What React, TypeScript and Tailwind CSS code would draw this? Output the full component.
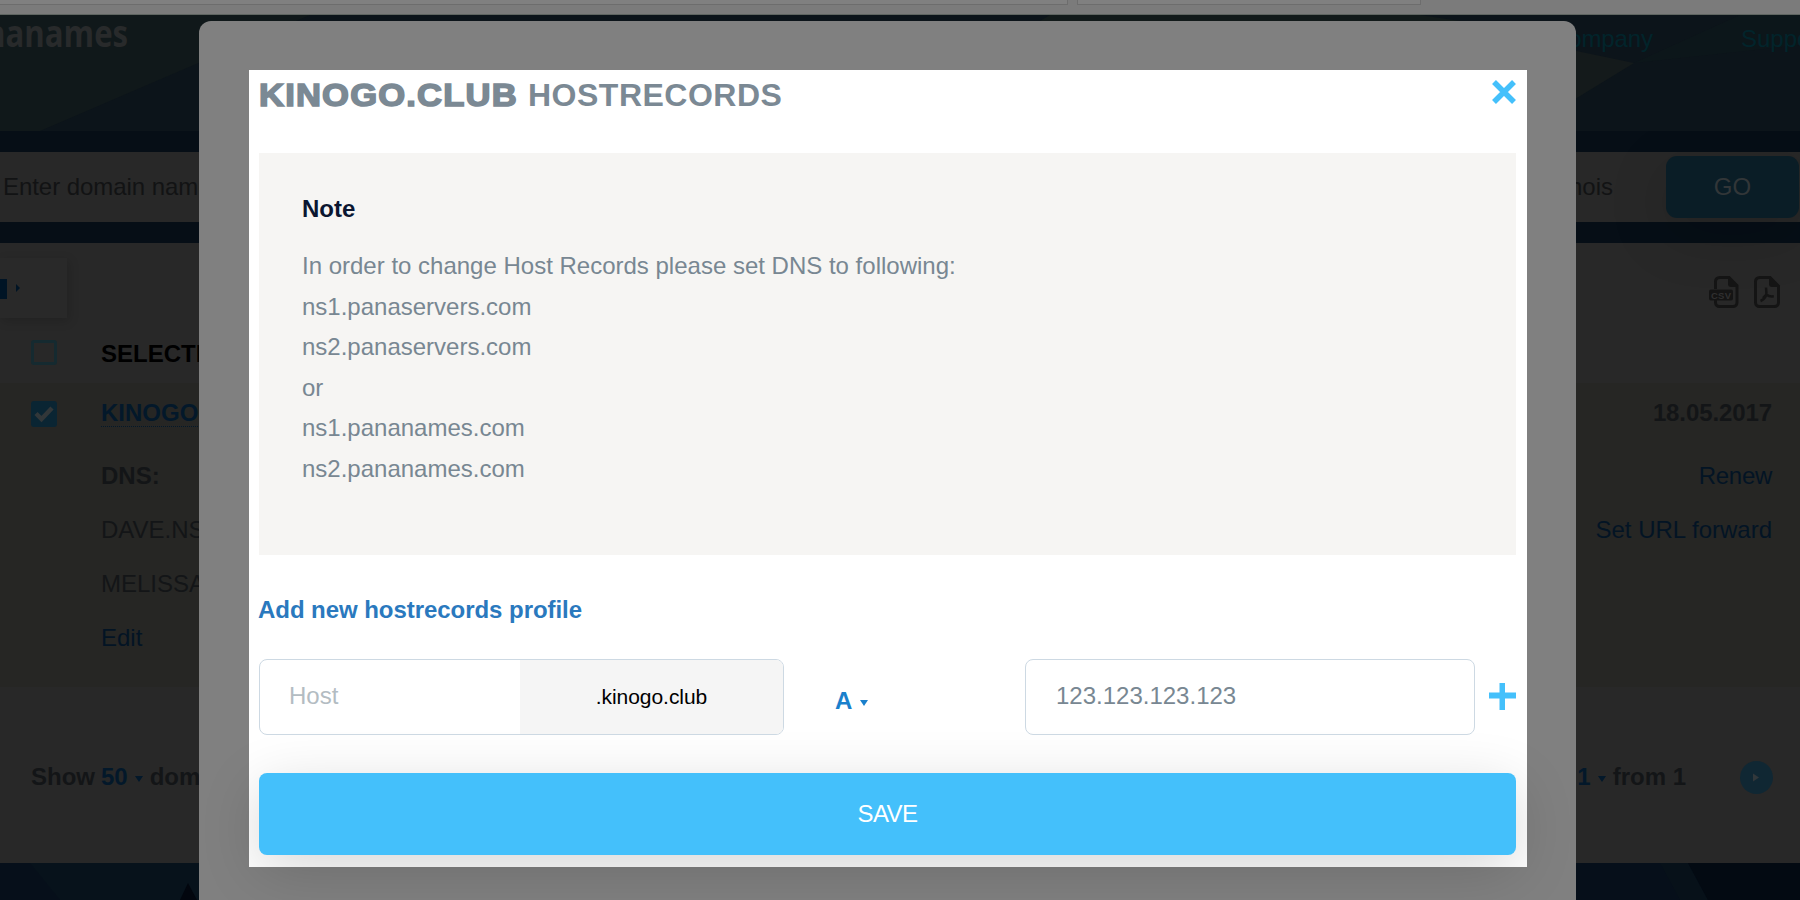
import React from "react";

function Caret({ className, fill }: { className: string; fill: string }) {
  return (
    <svg className={className} viewBox="0 0 8 6" fill={fill}>
      <path d="M0 0h8L4 6z" />
    </svg>
  );
}

function BrowserStrip() {
  return (
    <div className="flex h-[15px] border-b border-[#5f6561] bg-[#7b7b7b]">
      <div className="h-[5px] w-[1068px] border-r border-b border-[#6d6d6d] bg-[#808080]" />
      <div className="ml-[9px] h-[5px] w-[344px] border-x border-b border-[#6d6d6d] bg-[#808080]" />
    </div>
  );
}

function Header() {
  return (
    <header className="relative flex h-[116px] justify-between overflow-hidden bg-[#0c141a]">
      <svg className="absolute inset-0" width="1800" height="116" viewBox="0 0 1800 116">
        <path d="M0 0H310L40 116H0z" fill="#10181a" />
        <path d="M1050 0H1420L1460 6H1040z" fill="#121a1a" />
        <path d="M1500 20L1634 48L1500 130z" fill="#141a1b" />
        <path d="M1634 48L1740 0H1800V30z" fill="#0d171b" opacity="0.6" />
      </svg>
      <div className="relative -ml-[15px] h-[42px] origin-left scale-x-[0.82] font-['Open_Sans','Noto_Sans',sans-serif] text-[38px] leading-[34px] font-bold text-[#282a2b]">
        nanames
      </div>
      <nav className="relative mr-[-25px] flex gap-[88px] text-2xl leading-[48px] text-[#02242b]">
        <span className="tracking-[-0.1px]">Company</span>
        <span>Support</span>
      </nav>
    </header>
  );
}

function SearchBar() {
  return (
    <div className="bg-[#060e16] py-[21px]">
      <div className="flex h-[70px] items-center bg-[#282828] pl-[3px] text-2xl text-[#121314]">
        <span className="grow tracking-[-0.05px]">Enter domain name</span>
        <span className="mr-[53px]">Whois</span>
        <button className="mr-px h-[62px] w-[133px] rounded-[11px] bg-[#0a1d26] text-[#323638] shadow-[0_15px_60px_rgba(0,0,0,0.16)]">
          GO
        </button>
      </div>
    </div>
  );
}

function FileIcons() {
  return (
    <div className="mt-[18px] mr-5 flex gap-[15px]">
      <svg width="30" height="32" viewBox="0 0 30 32">
        <path
          d="M6.5 13V5.5a4 4 0 0 1 4-4h9.500L28 9.500v17a4 4 0 0 1-4 4H10.500a4 4 0 0 1-4-4V24"
          fill="none"
          stroke="#141414"
          strokeWidth="3"
        />
        <path d="M19 1l10 10h-7a3 3 0 0 1-3-3z" fill="#141414" />
        <rect x="0" y="13.500" width="24" height="11" rx="2" fill="#141414" />
        <text x="2" y="22.500" fontSize="9.500" fontWeight="bold" textLength="20" fill="#303030">
          CSV
        </text>
      </svg>
      <svg width="26" height="32" viewBox="0 0 26 32">
        <path
          d="M5.500 1.500H16L24.500 10v16.500a4 4 0 0 1-4 4h-15a4 4 0 0 1-4-4v-21a4 4 0 0 1 4-4z"
          fill="none"
          stroke="#141414"
          strokeWidth="3"
        />
        <path d="M15 1l10 10h-7a3 3 0 0 1-3-3z" fill="#141414" />
        <path
          d="M12 11.500c.3 3 .6 5.500.3 7.500-1.200 3-3 4.800-5.800 6M12.300 18.500c2 1.800 4.200 2.200 7.500 1.800M12.300 18.500L9 22"
          fill="none"
          stroke="#141414"
          strokeWidth="2.500"
        />
      </svg>
    </div>
  );
}

function DomainList() {
  return (
    <main className="bg-[#282828] text-2xl text-[#131517]">
      <div className="flex h-[75px] justify-between pt-[15px]">
        <div className="flex h-[60px] w-[67px] items-start bg-[#292929] pt-[21px] shadow-[2px_3px_10px_rgba(0,0,0,0.16)]">
          <div className="h-5 w-[7px] bg-[#001425]" />
          <svg className="mt-[5px] ml-[9px]" width="4" height="8" viewBox="0 0 4 8">
            <path d="M0 0l4 4-4 4z" fill="#001425" />
          </svg>
        </div>
        <FileIcons />
      </div>
      <div className="flex h-[65px] items-center pt-[4px] pl-[31px]">
        <div className="h-[25px] w-[26px] rounded-[3px] border-3 border-[#152a30]" />
        <span className="mt-[3px] ml-[44px] font-bold text-black">SELECTED</span>
      </div>
      <section className="h-[304px] bg-[#262624]">
        <div className="flex h-[60px] items-center pr-7 pl-[31px] font-bold">
          <svg className="mt-px" width="26" height="26" viewBox="0 0 26 26">
            <rect width="26" height="26" rx="3" fill="#0a2533" />
            <path d="M5 12.500l5.500 5.500L21 7" fill="none" stroke="#323739" strokeWidth="4.500" />
          </svg>
          <span className="mt-px ml-[44px] border-b border-dotted border-[#03182a] leading-[26px] text-[#03182a]">
            KINOGO.CLUB
          </span>
          <span className="ml-auto tracking-[-0.1px]">18.05.2017</span>
        </div>
        <div className="mt-[6px] mr-7 ml-[101px] flex justify-between leading-[54px]">
          <div>
            <div className="font-bold">DNS:</div>
            <div>DAVE.NS.CLOUDFLARE.COM</div>
            <div>MELISSA.NS.CLOUDFLARE.COM</div>
            <div className="text-[#031424]">Edit</div>
          </div>
          <div className="text-right text-[#031424]">
            <div className="tracking-[-0.3px]">Renew</div>
            <div>Set URL forward</div>
          </div>
        </div>
      </section>
      <footer className="flex h-[176px] items-center justify-between pt-1 pr-[27px] pl-[31px] font-bold">
        <div className="flex items-center">
          Show
          <span className="ml-[6px] text-[#03182a]">50</span>
          <Caret className="mt-[3px] mr-[7px] ml-[7px] h-[6px] w-2" fill="#03182a" />
          domains
        </div>
        <div className="flex items-center">
          <span className="text-[#03182a]">1</span>
          <Caret className="mt-[3px] mr-[7px] ml-[7px] h-[6px] w-2" fill="#03182a" />
          from 1
          <svg className="ml-[54px]" width="33" height="33" viewBox="0 0 33 33">
            <circle cx="16.500" cy="16.500" r="16.500" fill="#102733" />
            <path d="M13 12.500l6 4-6 4z" fill="#32383b" />
          </svg>
        </div>
      </footer>
    </main>
  );
}

function BottomBand() {
  return (
    <div className="h-[37px] overflow-hidden bg-[#060f1a]">
      <svg width="1800" height="37" viewBox="0 0 1800 37">
        <path d="M30 0H199V37H60z" fill="#07121b" />
        <path d="M180 37l8-17 9 17z" fill="#02060e" />
        <path d="M1660 0H1688L1708 37H1680z" fill="#071119" />
        <path d="M1688 0H1800V37H1708z" fill="#030a12" />
      </svg>
    </div>
  );
}

const noteLines = [
  "In order to change Host Records please set DNS to following:",
  "ns1.panaservers.com",
  "ns2.panaservers.com",
  "or",
  "ns1.pananames.com",
  "ns2.pananames.com",
];

function HostRecordsDialog() {
  return (
    <div className="absolute top-[21px] left-[199px] h-[879px] w-[1377px] rounded-t-xl bg-[#808080] pt-[49px] pl-[50px]">
      <div className="h-[797px] w-[1278px] bg-white pr-[11px] pl-[10px]">
        <div className="flex h-[50px] items-center justify-between">
          <h1 className="flex text-[32px] leading-[50px] font-bold text-[#7b8994]">
            <span className="w-[269px]">
              <span className="inline-block origin-left scale-x-[1.08] tracking-[1.1px] [-webkit-text-stroke:1.6px_#7b8994]">
                KINOGO.CLUB
              </span>
            </span>
            <span className="tracking-[0.5px]">HOSTRECORDS</span>
          </h1>
          <svg className="-mt-[7px]" width="24" height="24" viewBox="0 0 24 24">
            <path d="M2 2l20 20M22 2L2 22" stroke="#44c0fb" strokeWidth="5.500" />
          </svg>
        </div>
        <div className="mt-[33px] h-[402px] bg-[#f6f5f3] pt-[36px] pl-[43px] text-2xl leading-[40.600px] text-[#788792]">
          <h2 className="mb-[16.500px] font-bold text-[#0b1630]">Note</h2>
          {noteLines.map((line) => (
            <p key={line}>{line}</p>
          ))}
        </div>
        <h3 className="mt-[35px] -ml-px text-2xl leading-[40px] font-bold tracking-[-0.05px] text-[#2a79be]">
          Add new hostrecords profile
        </h3>
        <div className="mt-[29px] flex h-[76px] text-2xl">
          <div className="flex w-[525px] overflow-hidden rounded-lg border border-[#cdd9e3]">
            <div className="w-[260px] pl-[29px] leading-[72px] text-[#b3bcc2]">Host</div>
            <div className="grow bg-[#f5f5f5] text-center text-[21px] leading-[73px] tracking-[-0.05px] text-black">
              .kinogo.club
            </div>
          </div>
          <div className="flex w-[241px] items-center pt-[7px] pl-[51px] font-bold text-[#1a80cc]">
            A
            <Caret className="mt-[4px] ml-2 h-[6px] w-2" fill="#1a80cc" />
          </div>
          <div className="w-[450px] rounded-lg border border-[#cdd9e3] pl-[30px] leading-[72px] text-[#788792]">
            123.123.123.123
          </div>
          <svg className="mt-6 ml-[14px]" width="27" height="27" viewBox="0 0 27 27">
            <path d="M0 9.500H10.500V0H16V9.500H27V15.500H16V27H10.500V15.500H0z" fill="#44c0fb" />
          </svg>
        </div>
        <button className="mt-[38px] block h-[82px] w-full rounded-lg bg-[#44c0fb] text-2xl tracking-[-0.6px] text-white shadow-[0_15px_60px_rgba(0,0,0,0.16)]">
          SAVE
        </button>
      </div>
    </div>
  );
}

export default function App() {
  return (
    <div className="relative h-[900px] w-[1800px] overflow-hidden font-['Liberation_Sans',Arial,sans-serif]">
      <BrowserStrip />
      <Header />
      <SearchBar />
      <DomainList />
      <BottomBand />
      <HostRecordsDialog />
    </div>
  );
}
